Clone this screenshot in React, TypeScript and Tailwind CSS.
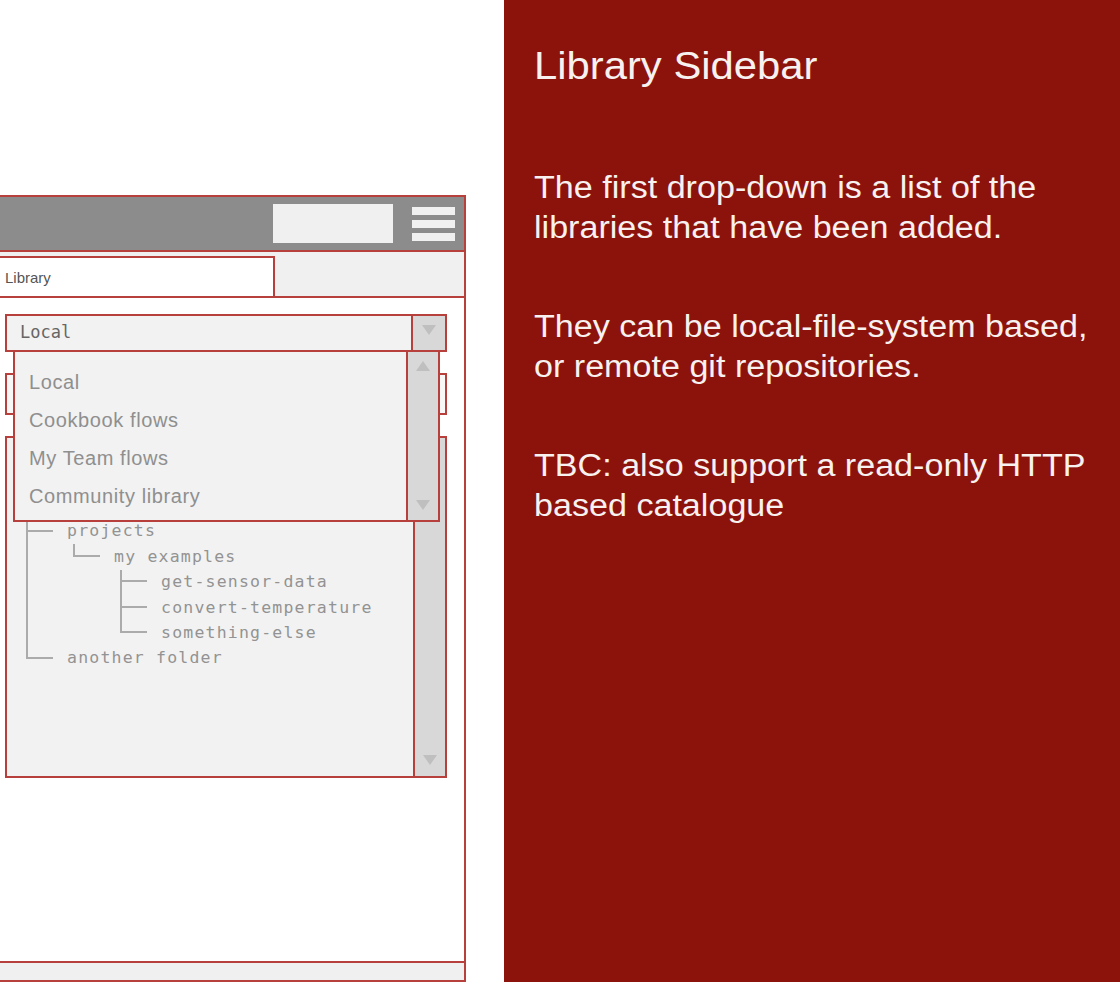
import React from "react"

type Row = { guides: boolean[]; kind: "tee" | "elbow"; text: string }

const rows: Row[] = [
    { guides: [], kind: "tee", text: "projects" },
    { guides: [true], kind: "elbow", text: "my examples" },
    { guides: [true, false], kind: "tee", text: "get-sensor-data" },
    { guides: [true, false], kind: "tee", text: "convert-temperature" },
    { guides: [true, false], kind: "elbow", text: "something-else" },
    { guides: [], kind: "elbow", text: "another folder" },
]

const dropdownItems = ["Local", "Cookbook flows", "My Team flows", "Community library"]

function Triangle({ up }: { up?: boolean }) {
    return (
        <svg width="14" height="10" viewBox="0 0 14 10">
            <polygon points={up ? "7,0 14,10 0,10" : "0,0 14,0 7,10"} fill="#bfbfbf" />
        </svg>
    )
}

function TreeRow({ row }: { row: Row }) {
    return (
        <div className="flex h-[25.4px] items-stretch">
            {row.guides.map((g, i) => (
                <div key={i} className={g ? "w-[47px] border-l-2 border-[#ababab]" : "w-[47px]"} />
            ))}
            <div className="mr-[14px] flex w-[27px] flex-col">
                <div className="h-1/2 border-b-2 border-l-2 border-[#ababab]" />
                <div className={row.kind === "tee" ? "h-1/2 border-l-2 border-[#ababab]" : "h-1/2"} />
            </div>
            <span className="self-center whitespace-pre font-['DejaVu_Sans_Mono',monospace] text-[16.5px] leading-none tracking-[1.2px] text-[#939393]">
                {row.text}
            </span>
        </div>
    )
}

export default function App() {
    return (
        <div className="flex h-[982px] w-[1120px] overflow-hidden bg-white font-['Liberation_Sans',Arial,sans-serif]">
            {/* Left side: sidebar mockup */}
            <div className="w-[504px] shrink-0 pt-[195px]">
                <div className="-ml-[4px] flex h-[787px] w-[470px] flex-col border-2 border-[#b8403c]">
                    {/* header */}
                    <div className="flex h-[55px] items-center justify-end gap-[19px] border-b-2 border-[#b8403c] bg-[#8c8c8c] pr-[9px]">
                        <div className="h-[39px] w-[120px] bg-[#f0f0f0]" />
                        <div className="flex w-[43px] flex-col gap-[5px]">
                            <div className="h-[8px] bg-[#f0f0f0]" />
                            <div className="h-[8px] bg-[#f0f0f0]" />
                            <div className="h-[8px] bg-[#f0f0f0]" />
                        </div>
                    </div>

                    {/* tab row */}
                    <div className="flex h-[46px] items-end border-b-2 border-[#b8403c] bg-[#f0f0f0]">
                        <div className="-mb-[2px] flex h-[42px] w-[277px] items-center border-2 border-[#b8403c] bg-white pl-[5px] pt-[2px] text-[15px] text-[#555]">
                            Library
                        </div>
                    </div>

                    {/* content */}
                    <div className="flex flex-1 flex-col gap-[21px] bg-white pl-[7px] pr-[17px] pt-[16px]">
                        <div className="relative">
                            <div className="flex h-[38px] border-2 border-[#b8403c] bg-[#f2f2f2]">
                                <div className="flex flex-1 items-center pl-[13px] font-['DejaVu_Sans_Mono',monospace] text-[17px] text-[#666]">
                                    Local
                                </div>
                                <div className="flex w-[34px] items-start justify-center border-l-2 border-[#b8403c] bg-[#d8d8d8] pt-[9px]">
                                    <Triangle />
                                </div>
                            </div>

                            {/* open drop-down */}
                            <div className="absolute left-[8px] top-[36px] z-10 flex h-[172px] w-[427px] border-2 border-[#b8403c] bg-[#f2f2f2]">
                                <div className="flex flex-1 flex-col pl-[14px] pt-[11px]">
                                    {dropdownItems.map((it) => (
                                        <div key={it} className="flex h-[38px] items-center text-[20px] tracking-[0.6px] text-[#8f8f8f]">
                                            {it}
                                        </div>
                                    ))}
                                </div>
                                <div className="flex w-[32px] flex-col items-center justify-between border-l-2 border-[#b8403c] bg-[#d8d8d8] pb-[10px] pt-[9px]">
                                    <Triangle up />
                                    <Triangle />
                                </div>
                            </div>
                        </div>

                        <div className="h-[42px] border-2 border-[#b8403c] bg-[#f7f7f7]" />

                        {/* tree */}
                        <div className="flex h-[342px] border-2 border-[#b8403c] bg-[#f2f2f2]">
                            <div className="flex-1 pl-[19px] pt-[81px]">
                                {rows.map((r) => (
                                    <TreeRow key={r.text} row={r} />
                                ))}
                            </div>
                            <div className="flex w-[32px] flex-col items-center justify-end border-l-2 border-[#b8403c] bg-[#d8d8d8] pb-[11px]">
                                <Triangle />
                            </div>
                        </div>
                    </div>

                    {/* bottom bar */}
                    <div className="h-[19px] border-t-2 border-[#b8403c] bg-[#f0f0f0]" />
                </div>
            </div>

            {/* Right side: notes */}
            <div className="h-full flex-1 bg-[#8c120c] pl-[30px] pt-[42px] text-[#f7f1f0]">
                <div className="origin-top-left scale-x-110 whitespace-nowrap">
                    <h1 className="text-[38px] leading-[48px]">Library Sidebar</h1>
                    <div className="mt-[78px] flex flex-col gap-[59px] text-[31px] leading-[40px]">
                        <p>
                            The first drop-down is a list of the
                            <br />
                            libraries that have been added.
                        </p>
                        <p>
                            They can be local-file-system based,
                            <br />
                            or remote git repositories.
                        </p>
                        <p>
                            TBC: also support a read-only HTTP
                            <br />
                            based catalogue
                        </p>
                    </div>
                </div>
            </div>
        </div>
    )
}
